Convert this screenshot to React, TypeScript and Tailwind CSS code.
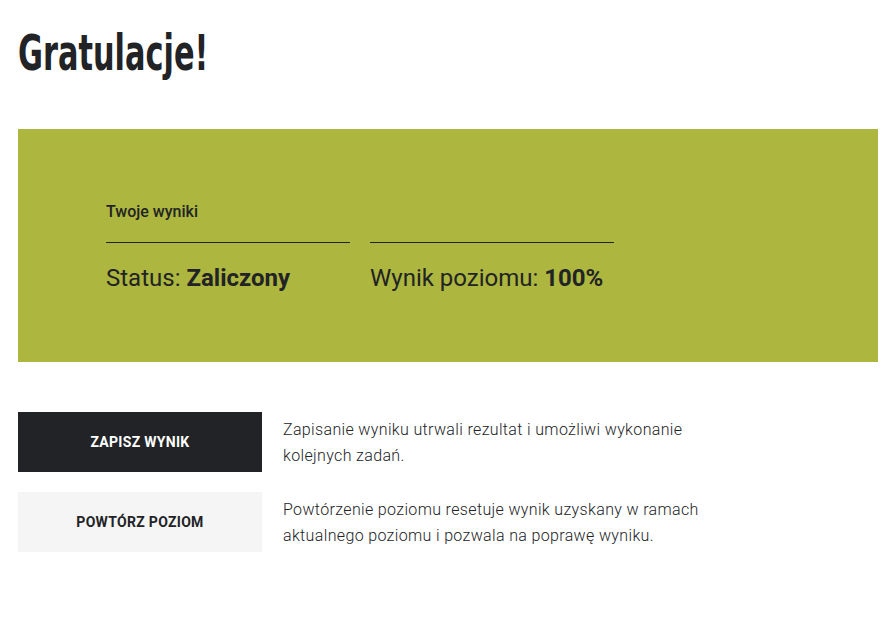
export default function App() {
  return (
    <div className="min-h-screen bg-white pl-[18px] pr-[12px] pt-[24px] text-[#222326] font-['Roboto',sans-serif]">
      {/* condensed display heading */}
      <h1 className="origin-left scale-x-[0.62] text-[49px] leading-[60px] font-bold tracking-[0px] font-['DejaVu_Sans',sans-serif]">
        Gratulacje!
      </h1>

      {/* results panel */}
      <div className="mt-[45px] h-[233px] bg-[#adb63e] px-[88px] pt-[72px]">
        <div className="text-[16px] leading-[22px] font-medium">Twoje wyniki</div>
        <div className="mt-[19px] flex gap-[20px]">
          <div className="w-[244px] border-t border-[#222326] pt-[20px] text-[24px] leading-[30px]">
            Status: <span className="font-bold">Zaliczony</span>
          </div>
          <div className="w-[244px] border-t border-[#222326] pt-[20px] text-[24px] leading-[30px]">
            Wynik poziomu: <span className="font-bold">100%</span>
          </div>
        </div>
      </div>

      {/* actions */}
      <div className="mt-[50px] flex flex-col gap-[20px]">
        <div className="flex gap-[21px]">
          <button className="h-[60px] w-[244px] shrink-0 bg-[#222326] text-[14px] tracking-[0.3px] font-bold uppercase text-white">
            Zapisz wynik
          </button>
          <p className="w-[440px] pt-[5px] text-[16px] leading-[26px] font-light tracking-[0.35px] text-[#222326]">
            Zapisanie wyniku utrwali rezultat i umożliwi wykonanie kolejnych zadań.
          </p>
        </div>
        <div className="flex gap-[21px]">
          <button className="h-[60px] w-[244px] shrink-0 bg-[#f5f5f5] text-[14px] tracking-[0.3px] font-bold uppercase text-[#222326]">
            Powtórz poziom
          </button>
          <p className="w-[440px] pt-[5px] text-[16px] leading-[26px] font-light tracking-[0.35px] text-[#222326]">
            Powtórzenie poziomu resetuje wynik uzyskany w ramach aktualnego poziomu i pozwala na poprawę wyniku.
          </p>
        </div>
      </div>
    </div>
  );
}
